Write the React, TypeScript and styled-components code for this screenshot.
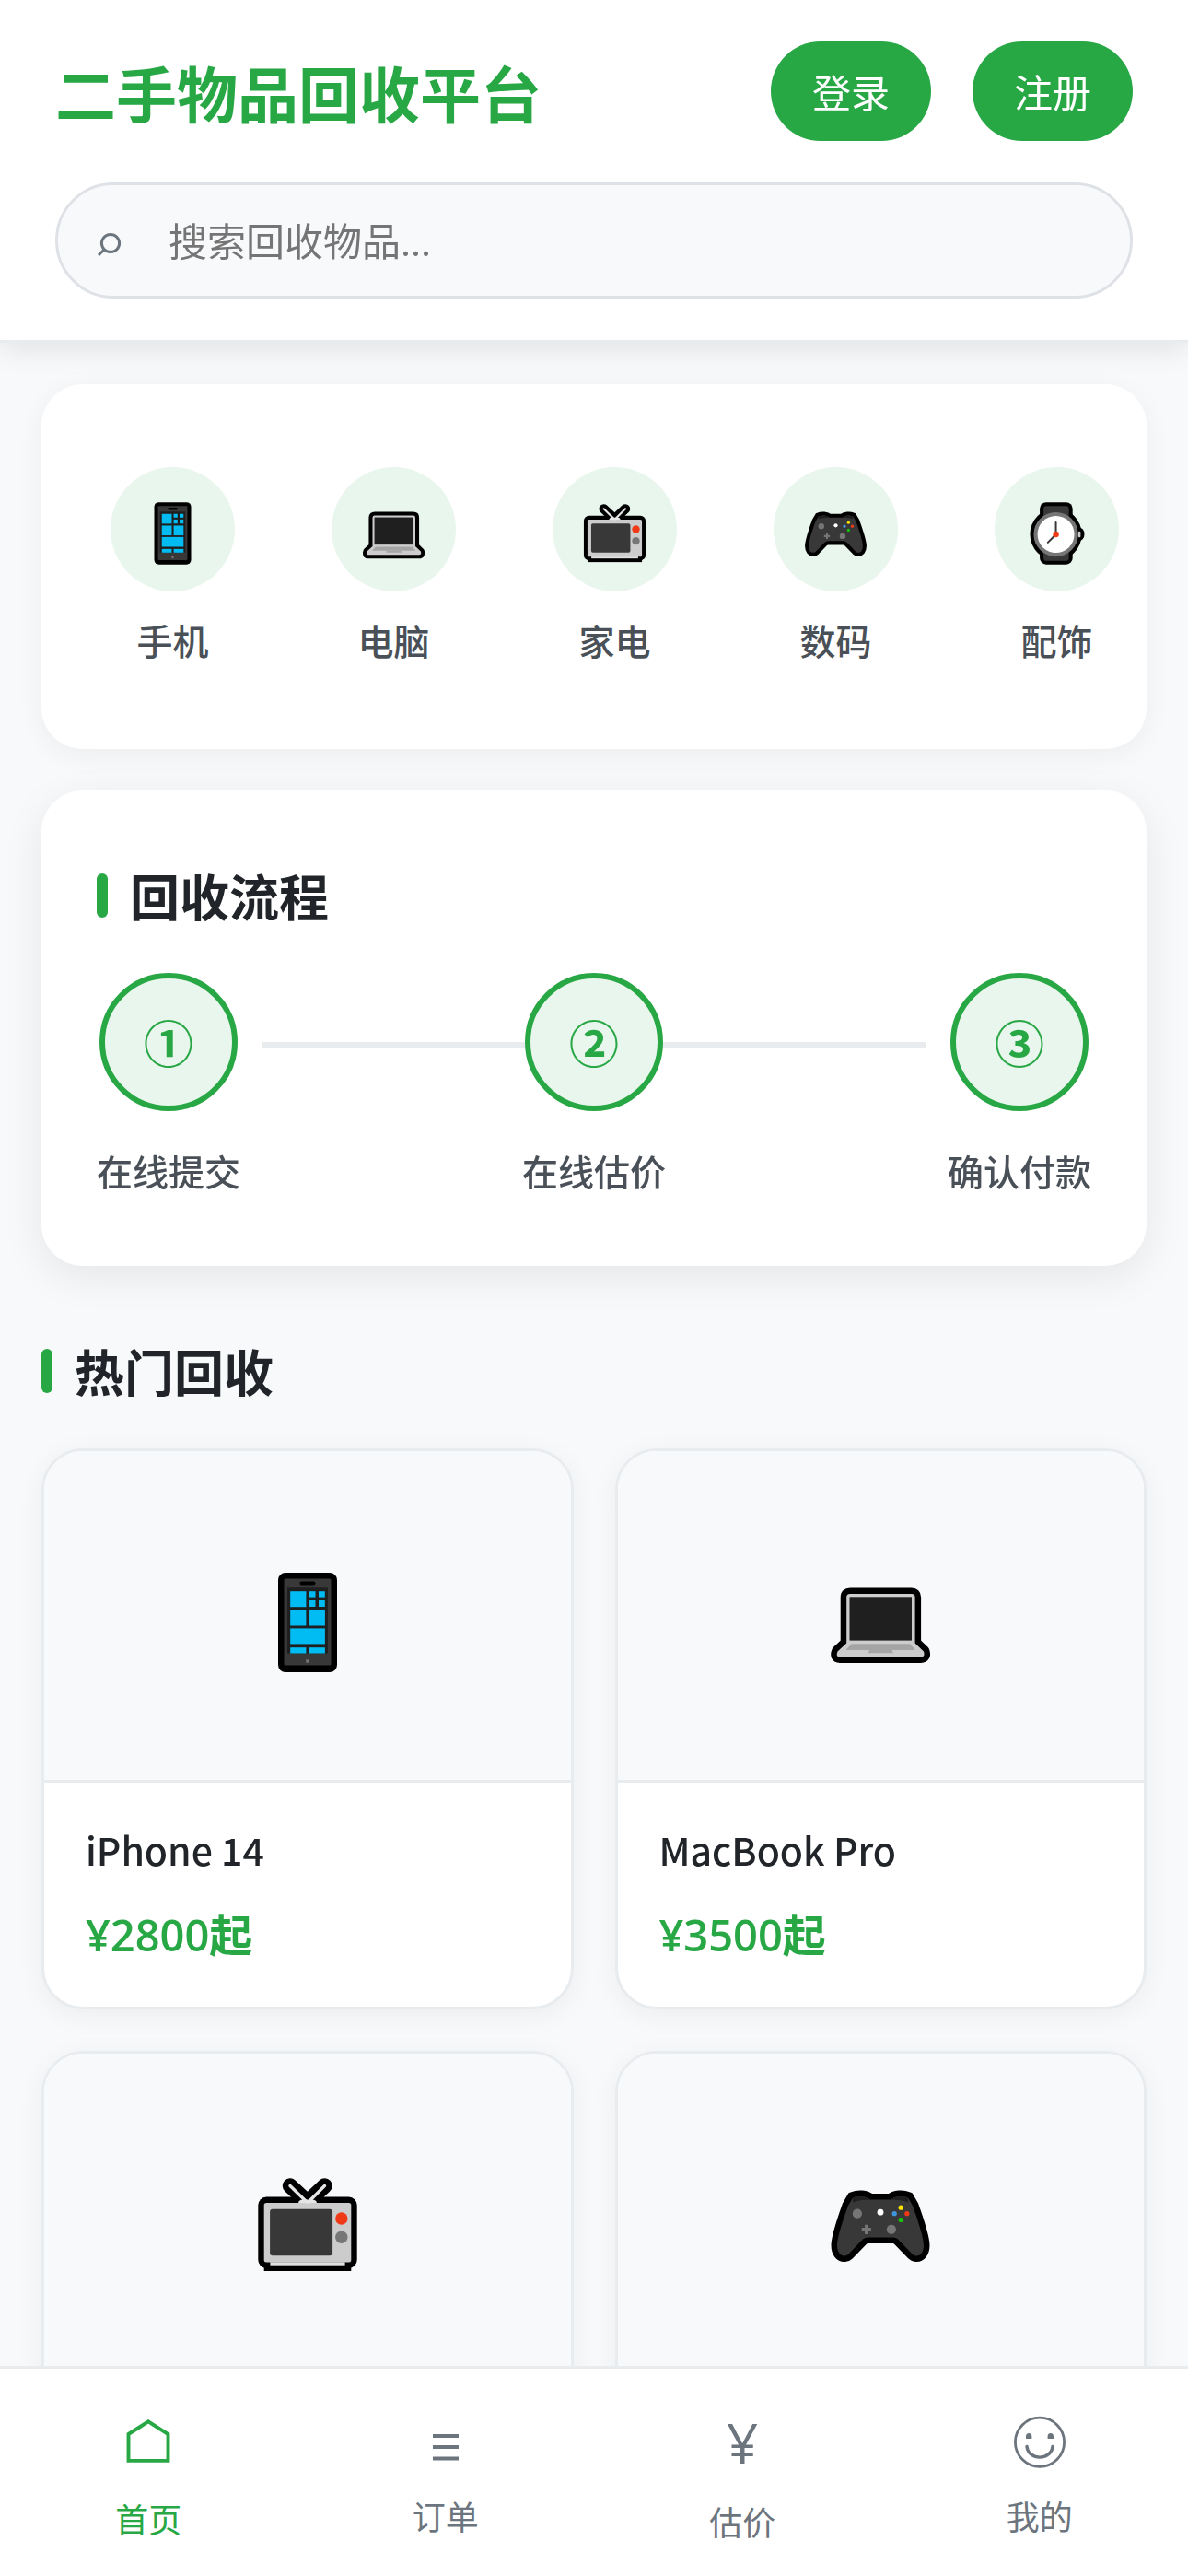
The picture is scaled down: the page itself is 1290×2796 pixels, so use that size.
import React from "react";
import styled, { createGlobalStyle, css } from "styled-components";

const color = {
  green: "#28a745",
  mint: "#e9f6ed",
  page: "#f8f9fb",
  line: "#e9ecef",
  field: "#dee2e6",
  ink: "#212529",
  text: "#495057",
  muted: "#6c757d",
};

const cjk = `"Noto Sans CJK SC", "Noto Sans", sans-serif`;
const latin = `"Open Sans", "Noto Sans CJK SC", sans-serif`;

const GlobalStyle = createGlobalStyle`
  * { box-sizing: border-box; }
  body { margin: 0; background: ${color.page}; color: ${color.ink}; font-family: ${cjk}; }
  h1, h2, h3, p, ol, ul { margin: 0; padding: 0; }
  ol, ul { list-style: none; }
  button, input { font-family: inherit; }
`;

const Shell = styled.div`
  display: flex;
  flex-direction: column;
  height: 100vh;
`;

const Header = styled.header`
  position: relative;
  z-index: 1;
  display: flex;
  flex-direction: column;
  gap: 45px;
  padding: 45px 60px;
  background: #fff;
  border-bottom: 3px solid ${color.line};
  box-shadow: 0 6px 30px rgba(0, 0, 0, 0.1);
`;

const HeaderRow = styled.div`
  display: flex;
  align-items: center;
  justify-content: space-between;
`;

const Brand = styled.h1`
  font-size: 66px;
  line-height: 96px;
  font-weight: 700;
  color: ${color.green};
`;

const Actions = styled.div`
  display: flex;
  gap: 45px;
`;

const PillButton = styled.button`
  padding: 24px 45px;
  border: 0;
  border-radius: 60px;
  background: ${color.green};
  color: #fff;
  font-size: 42px;
  line-height: 60px;
  cursor: pointer;
`;

const SearchBox = styled.label`
  display: flex;
  align-items: center;
  gap: 48px;
  padding: 0 42px;
  border: 3px solid ${color.field};
  border-radius: 75px;
  background: ${color.page};
`;

const SearchInput = styled.input`
  flex: 1;
  min-width: 0;
  height: 120px;
  padding: 0;
  border: 0;
  outline: 0;
  background: transparent;
  font-family: ${latin};
  font-size: 42px;
  color: ${color.ink};
  &::placeholder { color: #757575; opacity: 1; }
`;

const Main = styled.main`
  flex: 1;
  min-height: 0;
  display: flex;
  flex-direction: column;
  gap: 45px;
  padding: 45px;
  overflow-y: auto;
  scrollbar-width: none;
`;

const panel = css`
  flex-shrink: 0;
  background: #fff;
  border-radius: 45px;
`;

const CategoryList = styled.ul`
  ${panel}
  display: flex;
  gap: 45px;
  padding: 45px;
  overflow-x: auto;
  scrollbar-width: none;
  box-shadow: 0 6px 30px rgba(0, 0, 0, 0.05);
`;

const Category = styled.li`
  flex: 0 0 195px;
  display: flex;
  flex-direction: column;
  align-items: center;
  gap: 24px;
  padding: 45px 0;
`;

const Disc = styled.div`
  display: grid;
  place-items: center;
  width: 135px;
  height: 135px;
  border-radius: 50%;
  background: ${color.mint};
`;

const Label = styled.span`
  font-size: 39px;
  line-height: 57px;
  font-weight: 500;
  color: ${color.text};
`;

const ProcessCard = styled.section`
  ${panel}
  display: flex;
  flex-direction: column;
  gap: 45px;
  padding: 75px 60px;
  box-shadow: 0 12px 45px rgba(0, 0, 0, 0.08);
`;

const SectionTitle = styled.h2`
  display: flex;
  align-items: center;
  gap: 24px;
  font-size: 54px;
  line-height: 78px;
  font-weight: 700;
  &::before {
    content: "";
    width: 12px;
    height: 48px;
    border-radius: 6px;
    background: ${color.green};
  }
`;

const Steps = styled.ol`
  position: relative;
  display: flex;
  justify-content: space-between;
  &::before {
    content: "";
    position: absolute;
    top: 75px;
    left: 180px;
    right: 180px;
    height: 6px;
    background: ${color.line};
  }
`;

const Step = styled.li`
  position: relative;
  display: flex;
  flex-direction: column;
  align-items: center;
  gap: 36px;
`;

const StepMark = styled.div`
  display: grid;
  place-items: center;
  width: 150px;
  height: 150px;
  border: 6px solid ${color.green};
  border-radius: 50%;
  background: ${color.mint};
  color: ${color.green};
  font-size: 54px;
  line-height: 78px;
  font-weight: 700;
`;

const HotSection = styled.section`
  flex-shrink: 0;
  display: flex;
  flex-direction: column;
  gap: 45px;
  padding-top: 30px;
`;

const ProductGrid = styled.div`
  display: grid;
  grid-template-columns: 1fr 1fr;
  gap: 45px;
`;

const ProductCard = styled.article`
  overflow: hidden;
  border: 3px solid ${color.line};
  border-radius: 45px;
  background: #fff;
  box-shadow: 0 6px 30px rgba(0, 0, 0, 0.05);
`;

const ProductImage = styled.div`
  display: grid;
  place-items: center;
  height: 360px;
  border-bottom: 3px solid ${color.line};
  background: ${color.page};
`;

const ProductInfo = styled.div`
  display: flex;
  flex-direction: column;
  gap: 33px;
  min-height: 243px;
  padding: 45px;
`;

const ProductName = styled.h3`
  font-size: 41px;
  line-height: 54px;
  font-weight: 500;
`;

const Price = styled.p`
  font-family: ${latin};
  font-size: 47px;
  line-height: 66px;
  font-weight: 600;
  color: ${color.green};
`;

const Nav = styled.nav`
  display: grid;
  grid-template-columns: repeat(4, 1fr);
  height: 228px;
  flex-shrink: 0;
  background: #fff;
  border-top: 3px solid ${color.line};
`;

const NavLink = styled.a<{ $active?: boolean }>`
  display: flex;
  flex-direction: column;
  align-items: center;
  justify-content: center;
  gap: 12px;
  font-size: 36px;
  line-height: 52px;
  text-decoration: none;
  color: ${(p) => (p.$active ? color.green : color.muted)};
`;

const YuanSign = styled.span`
  font-family: ${latin};
  font-size: 60px;
  line-height: 93px;
`;

type Art = "phone" | "laptop" | "tv" | "gamepad" | "watch";

const laptopBody =
  "M-33 -24H34Q37.6 -24 37.6 -20.500V29.500L47 38.500Q49 44.400 44 44.400H-44Q-49 44.400 -46.500 38.500L-36.800 29.500V-20.500Q-36.800 -24 -33 -24Z";

const padBody =
  "M-30 -22.500C-24 -25 -16 -24.500 -11 -20.500H11C16 -24.500 24 -25 30 -22.500L35 -14C40 0 47 20 47 29C47 37 43 41 38.500 40.500Q36 40 35 39L21 24.500Q18 20.500 13 20.500H-13Q-18 20.500 -21 24.500L-35 39Q-36 40 -38.500 40.500C-43 41 -47 37 -47 29C-47 20 -40 0 -35 -14Z";

const artwork: Record<Art, React.ReactNode> = {
  phone: (
    <>
      <rect x="-32" y="-47" width="64" height="108" rx="8" fill="#000" />
      <rect x="-25.500" y="-40.400" width="51" height="94" rx="1.500" fill="#383838" />
      <rect x="-22" y="-30.700" width="44" height="71.200" fill="#1f1f1f" />
      <rect x="-8.500" y="-37.500" width="17" height="4" rx="2" fill="#000" />
      <g fill="#00bcf2">
        <rect x="-18.800" y="-26.800" width="17.200" height="17" />
        <rect x="1.700" y="-26.800" width="6.800" height="6.400" />
        <rect x="12" y="-26.800" width="6.800" height="6.400" />
        <rect x="1.700" y="-17" width="6.800" height="7" />
        <rect x="12" y="-17" width="6.800" height="7" />
        <rect x="-18.800" y="-6.500" width="17.200" height="17" />
        <rect x="1.700" y="-6.500" width="17.200" height="17" />
        <rect x="-18.800" y="13.400" width="37.700" height="17" />
        <rect x="-18.800" y="34.200" width="17.200" height="6.300" />
        <rect x="1.700" y="34.200" width="17.200" height="6.300" />
      </g>
      <rect x="-1.700" y="47.300" width="3.400" height="3.400" fill="#767676" />
    </>
  ),
  laptop: (
    <>
      <path d={laptopBody} fill="#000" stroke="#000" strokeWidth="13" strokeLinejoin="round" />
      <path d={laptopBody} fill="#ccc" />
      <rect x="-33.500" y="-20.700" width="67.500" height="47.300" fill="#1f1f1f" />
      <path d="M-31.500 30.300H32L38 37H-37.500Z" fill="#a5a5a5" />
      <path d="M-12 37H12.500L14 40.300H-13.500Z" fill="#a5a5a5" />
    </>
  ),
  tv: (
    <>
      <path d="M-19 -35.500L0 -18L18.500 -35.500" fill="none" stroke="#000" strokeWidth="16.500" strokeLinecap="round" />
      <rect x="-53.700" y="-23.500" width="107.400" height="77.500" rx="9" fill="#000" />
      <rect x="-47.300" y="46" width="94.600" height="11" fill="#000" />
      <rect x="-47.300" y="-17" width="94.600" height="64.500" rx="2.500" fill="#ccc" />
      <rect x="-40.600" y="47.300" width="81.200" height="3.400" fill="#e0e0e0" />
      <rect x="-40.900" y="-10.200" width="68" height="50.500" rx="3" fill="#383838" />
      <path d="M-19 -35.500L-1 -18M18.500 -35.500L1 -18" stroke="#e6e6e6" strokeWidth="3.400" strokeLinecap="round" />
      <path d="M-10 -17Q-9.500 -20.500 -5 -20.500H5Q9.500 -20.500 10 -17Z" fill="#e6e6e6" />
      <path d="M0 -22L-4.500 -26.500H4.500Z" fill="#000" />
      <circle cx="36.800" cy="0" r="6.700" fill="#f03a17" />
      <circle cx="36.800" cy="20.200" r="6.700" fill="#767676" />
    </>
  ),
  gamepad: (
    <>
      <path d={padBody} fill="#000" stroke="#000" strokeWidth="13" />
      <path d={padBody} fill="#383838" />
      <path d="M-30 -22.500C-24 -25 -16 -24.500 -11 -20.500Q-23 -20.500 -30 -17.500ZM30 -22.500C24 -25 16 -24.500 11 -20.500Q23 -20.500 30 -17.500Z" fill="#1f1f1f" />
      <circle cx="-25.100" cy="-5.300" r="5.100" fill="#767676" />
      <circle cx="11.900" cy="11.800" r="5.100" fill="#767676" />
      <path d="M-20.300 11.800H-10.100M-15.200 6.700V16.900" stroke="#767676" strokeWidth="3.400" />
      <circle cx="0" cy="-6.800" r="3.400" fill="#fff" />
      <circle cx="22.200" cy="-11.800" r="2.600" fill="#fde300" />
      <circle cx="15.200" cy="-5.300" r="2.600" fill="#4296dd" />
      <circle cx="28.800" cy="-5.300" r="2.600" fill="#f03a17" />
      <circle cx="22.200" cy="1.500" r="2.600" fill="#16c60c" />
    </>
  ),
  watch: (
    <>
      <rect x="-29.500" y="-47" width="57" height="108" rx="11" fill="#000" />
      <circle cx="-1.500" cy="8.800" r="45" fill="#000" />
      <path d="M36 -3.500Q48 -3 48 8.800Q48 20 36 21Z" fill="#000" />
      <rect x="-23" y="-40.600" width="44" height="95.500" rx="5" fill="#383838" />
      <circle cx="-1.500" cy="8.800" r="38.600" fill="#767676" />
      <rect x="37.400" y="3.700" width="4" height="10.200" rx="1.500" fill="#ccc" />
      <circle cx="-1.500" cy="8.800" r="32" fill="#fff" />
      <path d="M-1.500 -12V8.800L-15.500 23" fill="none" stroke="#383838" strokeWidth="3.200" strokeLinecap="round" />
      <circle cx="-1.500" cy="8.800" r="5.200" fill="#f03a17" />
    </>
  ),
};

function Picture({ art, large }: { art: Art; large?: boolean }) {
  return (
    <svg width={large ? 120 : 75} height={large ? 136 : 85} viewBox="-60 -68 120 136" aria-hidden="true">
      {artwork[art]}
    </svg>
  );
}

const categories: { art: Art; name: string }[] = [
  { art: "phone", name: "手机" },
  { art: "laptop", name: "电脑" },
  { art: "tv", name: "家电" },
  { art: "gamepad", name: "数码" },
  { art: "watch", name: "配饰" },
];

const steps = [
  { mark: "①", name: "在线提交" },
  { mark: "②", name: "在线估价" },
  { mark: "③", name: "确认付款" },
];

const products: { art: Art; name?: string; price?: string }[] = [
  { art: "phone", name: "iPhone 14", price: "¥2800起" },
  { art: "laptop", name: "MacBook Pro", price: "¥3500起" },
  { art: "tv" },
  { art: "gamepad" },
];

const navItems = [
  {
    name: "首页",
    icon: (
      <svg width="90" height="87" viewBox="0 0 90 87" fill="none" stroke="currentColor" strokeWidth="3.900" aria-hidden="true">
        <path d="M23.500 34L45 20.300L66.500 34V62.900H23.500Z" />
      </svg>
    ),
  },
  {
    name: "订单",
    icon: (
      <svg width="90" height="81" viewBox="0 0 90 81" fill="none" stroke="currentColor" strokeWidth="3.800" aria-hidden="true">
        <path d="M31 33H59M31 45H59M31 57.500H59" />
      </svg>
    ),
  },
  { name: "估价", icon: <YuanSign>¥</YuanSign> },
  {
    name: "我的",
    icon: (
      <svg width="90" height="81" viewBox="0 0 90 81" fill="none" stroke="currentColor" aria-hidden="true">
        <circle cx="45" cy="39.800" r="26.600" strokeWidth="2.800" />
        <path d="M31 44.500C33 60 57 60 59 44.500" strokeWidth="3.400" strokeLinecap="round" />
        <path d="M30 36V33.500Q30 30 33.200 30T36.400 33.500V36ZM53.600 36V33.500Q53.600 30 56.800 30T60 33.500V36Z" fill="currentColor" stroke="none" />
      </svg>
    ),
  },
];

export default function App() {
  return (
    <Shell>
      <GlobalStyle />
      <Header>
        <HeaderRow>
          <Brand>二手物品回收平台</Brand>
          <Actions>
            <PillButton type="button">登录</PillButton>
            <PillButton type="button">注册</PillButton>
          </Actions>
        </HeaderRow>
        <SearchBox>
          <svg width="30" height="36" viewBox="0 0 30 36" fill="none" stroke={color.muted} strokeWidth="3" aria-hidden="true">
            <circle cx="15" cy="21" r="9.600" />
            <path d="M8.500 27.500L2 34" />
          </svg>
          <SearchInput type="search" aria-label="搜索回收物品" placeholder="搜索回收物品..." />
        </SearchBox>
      </Header>

      <Main>
        <CategoryList>
          {categories.map((c) => (
            <Category key={c.name}>
              <Disc>
                <Picture art={c.art} />
              </Disc>
              <Label>{c.name}</Label>
            </Category>
          ))}
        </CategoryList>

        <ProcessCard>
          <SectionTitle>回收流程</SectionTitle>
          <Steps>
            {steps.map((s) => (
              <Step key={s.name}>
                <StepMark>{s.mark}</StepMark>
                <Label>{s.name}</Label>
              </Step>
            ))}
          </Steps>
        </ProcessCard>

        <HotSection>
          <SectionTitle>热门回收</SectionTitle>
          <ProductGrid>
            {products.map((p) => (
              <ProductCard key={p.art}>
                <ProductImage>
                  <Picture art={p.art} large />
                </ProductImage>
                <ProductInfo>
                  {p.name && <ProductName>{p.name}</ProductName>}
                  {p.price && <Price>{p.price}</Price>}
                </ProductInfo>
              </ProductCard>
            ))}
          </ProductGrid>
        </HotSection>
      </Main>

      <Nav>
        {navItems.map((n, i) => (
          <NavLink key={n.name} href="#" $active={i === 0}>
            {n.icon}
            <span>{n.name}</span>
          </NavLink>
        ))}
      </Nav>
    </Shell>
  );
}
